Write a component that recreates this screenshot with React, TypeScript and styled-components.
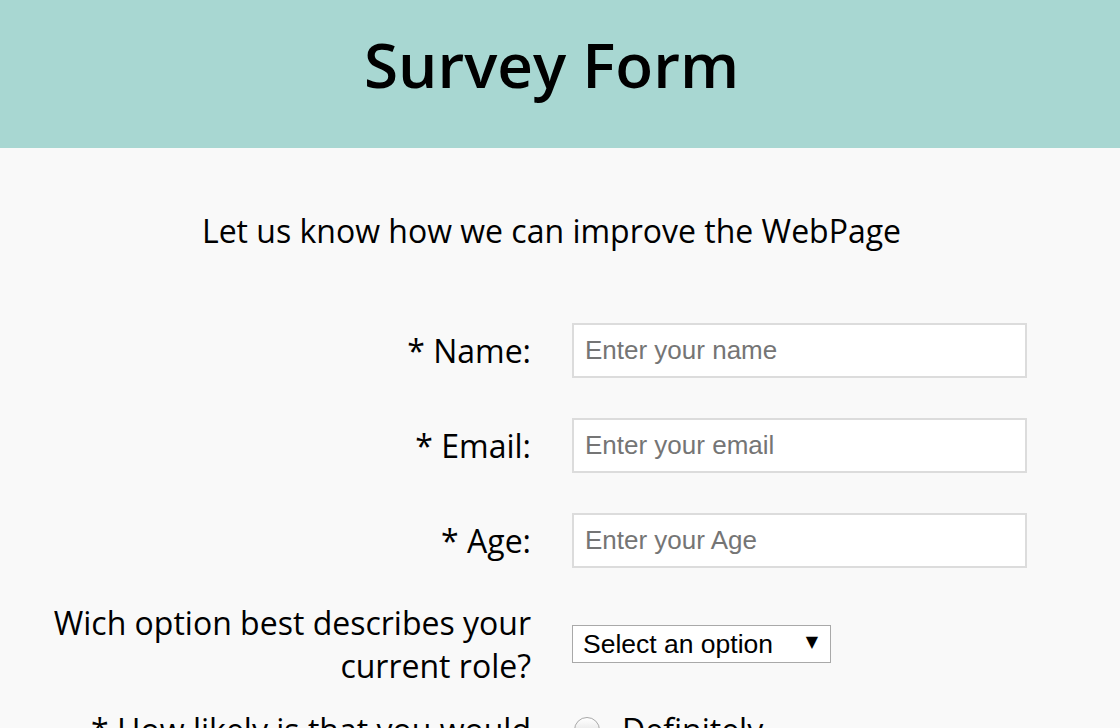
import React from "react";
import styled, { createGlobalStyle } from "styled-components";

const Global = createGlobalStyle`
  html, body { margin: 0; padding: 0; }
  body {
    background: #f9f9f9;
    font-family: "Open Sans", "Noto Sans", sans-serif;
    color: #000;
    overflow: hidden;
  }
`;

const Header = styled.header`
  box-sizing: border-box;
  height: 148px;
  background: #a8d7d2;
  padding: 22px 17px 0 0;
  text-align: center;
`;

const Title = styled.h1`
  margin: 0;
  font-size: 62px;
  font-weight: 600;
  line-height: normal;
`;

const Main = styled.main`
  padding-top: 61px;
`;

const Subtitle = styled.p`
  margin: 0 0 71px;
  padding-right: 17px;
  text-align: center;
  font-size: 32px;
  line-height: normal;
`;

const Form = styled.form`
  display: flex;
  flex-direction: column;
`;

const Row = styled.div<{ $align?: string; $mb: number }>`
  display: grid;
  grid-template-columns: 531px 455px;
  column-gap: 41px;
  align-items: ${(p) => p.$align ?? "center"};
  margin-bottom: ${(p) => p.$mb}px;
`;

const Label = styled.label`
  text-align: right;
  font-size: 32px;
  line-height: normal;
  padding-left: 40px;
`;

const TextInput = styled.input`
  box-sizing: border-box;
  width: 455px;
  height: 55px;
  border: 2px solid #dcdcdc;
  background: #fff;
  padding: 0 11px;
  font-family: "Liberation Sans", Arial, sans-serif;
  font-size: 26px;
  color: #000;
  outline: none;
  &::placeholder { color: #757575; }
`;

const SelectWrap = styled.div`
  position: relative;
  width: 259px;
  height: 38px;
`;

const Select = styled.select`
  box-sizing: border-box;
  appearance: none;
  width: 259px;
  height: 38px;
  border: 1px solid #a9a9a9;
  border-radius: 0;
  background: #fff;
  padding: 0 0 0 10px;
  font-family: "Liberation Sans", Arial, sans-serif;
  font-size: 26.5px;
  color: #000;
  outline: none;
`;

const Arrow = styled.span`
  position: absolute;
  right: 13px;
  top: 9px;
  font-family: "DejaVu Sans", sans-serif;
  font-size: 16px;
  line-height: 1;
  pointer-events: none;
`;

const RadioGroup = styled.div`
  display: flex;
  flex-direction: column;
`;

const RadioOption = styled.label`
  display: flex;
  align-items: center;
  gap: 22px;
  font-size: 32px;
  line-height: normal;
  padding-left: 2px;
`;

const Radio = styled.input`
  appearance: none;
  margin: 0;
  width: 26px;
  height: 26px;
  border-radius: 50%;
  border: 1px solid #a8a8a8;
  background: linear-gradient(#ffffff, #d6d6d6);
  box-sizing: border-box;
`;

export default function App() {
  return (
    <>
      <Global />
      <Header>
        <Title>Survey Form</Title>
      </Header>
      <Main>
        <Subtitle>Let us know how we can improve the WebPage</Subtitle>
        <Form>
          <Row $mb={40}>
            <Label htmlFor="name">* Name:</Label>
            <TextInput id="name" type="text" placeholder="Enter your name" />
          </Row>
          <Row $mb={40}>
            <Label htmlFor="email">* Email:</Label>
            <TextInput id="email" type="email" placeholder="Enter your email" />
          </Row>
          <Row $mb={33}>
            <Label htmlFor="age">* Age:</Label>
            <TextInput id="age" type="number" placeholder="Enter your Age" />
          </Row>
          <Row $mb={21}>
            <Label htmlFor="role">Wich option best describes your current role?</Label>
            <SelectWrap>
              <Select id="role" defaultValue="">
                <option value="" disabled>Select an option</option>
                <option>Student</option>
                <option>Full time job</option>
                <option>Prefer not to say</option>
              </Select>
              <Arrow>▼</Arrow>
            </SelectWrap>
          </Row>
          <Row $mb={0} $align="start">
            <Label>* How likely is that you would recommend this page to a friend?</Label>
            <RadioGroup>
              <RadioOption>
                <Radio type="radio" name="recommend" />
                Definitely
              </RadioOption>
              <RadioOption>
                <Radio type="radio" name="recommend" />
                Maybe
              </RadioOption>
            </RadioGroup>
          </Row>
        </Form>
      </Main>
    </>
  );
}
